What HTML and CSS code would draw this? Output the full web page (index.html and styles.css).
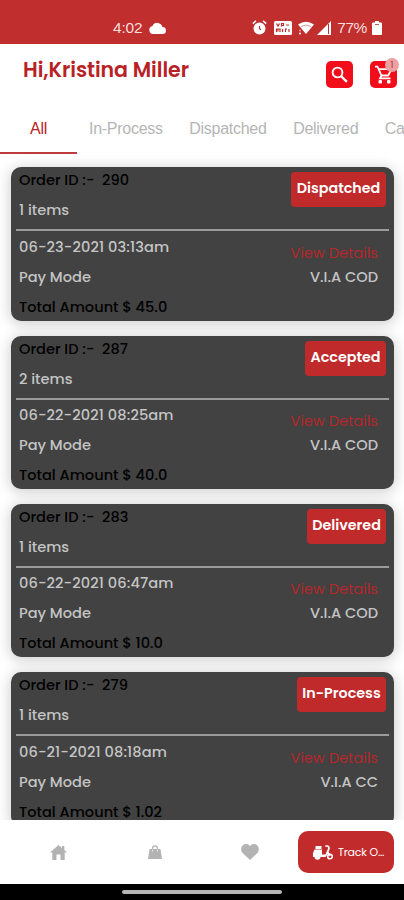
FILE: index.html
```html
<!DOCTYPE html>
<html lang="en">
<head>
    <meta charset="UTF-8">
    <meta name="viewport" content="width=device-width, initial-scale=1.0">
    <title>My Orders</title>
    <link rel="stylesheet" href="styles.css">
</head>
<body>
    <div class="phone">
        <div class="status-bar">
            <span class="time">4:02</span>
            <svg class="cloud" width="17" height="12" viewBox="0 0 17 12"><path fill="#fff" d="M4 12a4 4 0 0 1-.5-7.9A5.2 5.2 0 0 1 13.400 5 3.500 3.500 0 0 1 13.500 12z"/></svg>
            <div class="status-icons">
                <svg width="15" height="15" viewBox="0 0 15 15"><circle cx="7.500" cy="8.500" r="6" fill="#fff"/><path d="M.8 3.600 4 .9M14.200 3.600 11 .9" stroke="#fff" stroke-width="1.500"/><path d="M7.500 6v2.800l1.500 1" fill="none" stroke="#c02e2e" stroke-width="1.200"/></svg>
                <svg width="18" height="14" viewBox="0 0 18 14"><rect width="18" height="14" rx="1.500" fill="#fff"/><path d="M2.500 2.500 4 5l1.500-2.500M7.500 5.500v-3h2v2h-2M12 4h3M2.500 11V8h1.500v2.500V8h2v3M8.500 8v3M11.500 11V8h1.500M15 8v3" fill="none" stroke="#c02e2e" stroke-width="1.200"/></svg>
                <svg width="16" height="14" viewBox="0 0 16 14"><path fill="#fff" d="M0 3.500Q8-2 16 3.500L8 13z"/><path d="M3 5.500Q8 2.500 13 5.500" fill="none" stroke="#c02e2e" stroke-width=".5"/><path d="M1 12.500h2M1.500 9.500h1" stroke="#fff" stroke-width="1.300"/></svg>
                <svg width="14" height="14" viewBox="0 0 14 14"><path fill="#fff" d="M14 0v14H0z"/><path d="M11.500 3v10" stroke="#c02e2e" stroke-width="1"/></svg>
                <span class="percent">77%</span>
                <svg width="10" height="14" viewBox="0 0 10 14"><path fill="#fff" d="M3 0h4v1.500h2a1 1 0 0 1 1 1V13a1 1 0 0 1-1 1H1a1 1 0 0 1-1-1V2.500a1 1 0 0 1 1-1h2z"/><path d="M3 3.500h4" stroke="#c02e2e" stroke-width=".8"/></svg>
            </div>
        </div>

        <header class="header">
            <h1>Hi,Kristina Miller</h1>
            <button class="icon-btn" aria-label="Search">
                <svg width="17" height="17" viewBox="0 0 17 17" fill="none" stroke="#fff"><circle cx="6.500" cy="6.500" r="4.900" stroke-width="1.900"/><path d="m10.200 10.200 5.700 5.700" stroke-width="2.300"/></svg>
            </button>
            <button class="icon-btn" aria-label="Cart">
                <svg width="19" height="19" viewBox="0 0 19 19"><path d="M1 1.700h2.500l4 8.800h6.700l3.300-6.300M4.600 4.200H13M7.500 10.500 6 13.300h10.500" fill="none" stroke="#fff" stroke-width="1.800"/><rect x="4.500" y="15" width="3.500" height="3.500" rx="1" fill="#fff"/><rect x="13" y="15" width="3.500" height="3.500" rx="1" fill="#fff"/></svg>
                <span class="cart-count">1</span>
            </button>
        </header>

        <nav class="tabs">
            <span class="tab active">All</span>
            <span class="tab">In-Process</span>
            <span class="tab">Dispatched</span>
            <span class="tab">Delivered</span>
            <span class="tab">Cancelled</span>
        </nav>

        <main class="orders">
            <div class="card">
                <div class="card-top">
                    <div>
                        <p class="order-id">Order ID :-&nbsp; 290</p>
                        <p class="items">1 items</p>
                    </div>
                    <span class="badge dispatched">Dispatched</span>
                </div>
                <div class="card-bottom">
                    <div>
                        <p class="date">06-23-2021 03:13am</p>
                        <p class="pay">Pay Mode</p>
                        <p class="total">Total Amount $ 45.0</p>
                    </div>
                    <div class="right">
                        <p class="details">View Details</p>
                        <p class="via">V.I.A COD</p>
                    </div>
                </div>
            </div>
            <div class="card">
                <div class="card-top">
                    <div>
                        <p class="order-id">Order ID :-&nbsp; 287</p>
                        <p class="items">2 items</p>
                    </div>
                    <span class="badge accepted">Accepted</span>
                </div>
                <div class="card-bottom">
                    <div>
                        <p class="date">06-22-2021 08:25am</p>
                        <p class="pay">Pay Mode</p>
                        <p class="total">Total Amount $ 40.0</p>
                    </div>
                    <div class="right">
                        <p class="details">View Details</p>
                        <p class="via">V.I.A COD</p>
                    </div>
                </div>
            </div>
            <div class="card">
                <div class="card-top">
                    <div>
                        <p class="order-id">Order ID :-&nbsp; 283</p>
                        <p class="items">1 items</p>
                    </div>
                    <span class="badge delivered">Delivered</span>
                </div>
                <div class="card-bottom">
                    <div>
                        <p class="date">06-22-2021 06:47am</p>
                        <p class="pay">Pay Mode</p>
                        <p class="total">Total Amount $ 10.0</p>
                    </div>
                    <div class="right">
                        <p class="details">View Details</p>
                        <p class="via">V.I.A COD</p>
                    </div>
                </div>
            </div>
            <div class="card">
                <div class="card-top">
                    <div>
                        <p class="order-id">Order ID :-&nbsp; 279</p>
                        <p class="items">1 items</p>
                    </div>
                    <span class="badge in-process">In-Process</span>
                </div>
                <div class="card-bottom">
                    <div>
                        <p class="date">06-21-2021 08:18am</p>
                        <p class="pay">Pay Mode</p>
                        <p class="total">Total Amount $ 1.02</p>
                    </div>
                    <div class="right">
                        <p class="details">View Details</p>
                        <p class="via">V.I.A CC</p>
                    </div>
                </div>
            </div>
        </main>

        <nav class="bottom-nav">
            <div class="nav-item">
                <svg width="17" height="15" viewBox="0 0 17 15"><path fill="#b3b3b3" d="M8.500 0 12 3V1h2.300v4L17 7.500h-2.300V15h-4.200V9.500h-4V15H2.300V7.500H0z"/></svg>
            </div>
            <div class="nav-item">
                <svg width="14" height="14" viewBox="0 0 14 14"><path fill="#b3b3b3" d="M1.500 4h11L14 14H0z"/><path d="M4.500 6V3.500a2.500 2.700 0 0 1 5 0V6" fill="none" stroke="#b3b3b3" stroke-width="1.300"/><path d="M4.500 4.500v2M9.500 4.500v2" stroke="#fff" stroke-width=".7"/></svg>
            </div>
            <div class="nav-item">
                <svg width="18" height="16" viewBox="0 0 18 16"><path fill="#b3b3b3" d="M9 16 1.600 9C-1.500 5.500.8 0 5 0c1.800 0 3.200.9 4 2.200C9.800.9 11.200 0 13 0c4.200 0 6.500 5.500 3.400 9z"/></svg>
            </div>
            <button class="track-btn">
                <svg width="20" height="15" viewBox="0 0 20 15"><path fill="#fff" d="M2.500 1h6v3h-6zM1.500 4.500H9v5h3.200l2.600-3.200 1.300 1-3.600 4.700H0V8z"/><circle cx="4.500" cy="11.800" r="3" fill="#fff"/><circle cx="17" cy="11.500" r="2.300" fill="none" stroke="#fff" stroke-width="1.600"/><path d="M12.200 1h2.200q2.500 1 1 4l-1.200 2.500 3.300 3" fill="none" stroke="#fff" stroke-width="1.700"/></svg>
                <span>Track O...</span>
            </button>
        </nav>
        <div class="gesture-bar"><div class="pill"></div></div>
    </div>
</body>
</html>
```
FILE: styles.css
```css
body {
    margin: 0;
    font-family: Poppins, Inter, sans-serif;
    background-color: #fff;
}
p, h1 {
    margin: 0;
}
button {
    border: none;
    padding: 0;
    font-family: inherit;
}
svg {
    display: block;
    flex: none;
}
.phone {
    width: 404px;
    height: 900px;
    display: flex;
    flex-direction: column;
    overflow: hidden;
}
.status-bar {
    height: 44px;
    flex: none;
    box-sizing: border-box;
    padding: 11px 22px 0 113px;
    display: flex;
    align-items: center;
    background-color: #c02e2e;
    color: #f8dddd;
    font-family: "Liberation Sans", sans-serif;
    font-size: 15.5px;
}
.time {
    letter-spacing: -0.2px;
}
.cloud {
    margin-left: 7px;
}
.status-icons {
    margin-left: auto;
    display: flex;
    align-items: center;
    gap: 6px;
}
.status-icons svg:first-child {
    margin-right: 1px;
}
.status-icons svg:nth-child(4) {
    margin-left: -3px;
}
.percent {
    letter-spacing: -0.4px;
    margin-right: -1px;
}
.header {
    height: 60px;
    flex: none;
    display: flex;
    align-items: center;
    padding: 0 7px 0 23px;
}
.header h1 {
    margin-right: auto;
    margin-top: -9px;
    font-size: 20.5px;
    font-weight: 600;
    letter-spacing: -0.05px;
    color: #b92225;
}
.icon-btn {
    position: relative;
    width: 27px;
    height: 27px;
    border-radius: 5px;
    background-color: #f10d19;
    display: flex;
    align-items: center;
    justify-content: center;
    margin-left: 17px;
}
.cart-count {
    position: absolute;
    top: -3px;
    right: -2px;
    width: 14px;
    height: 14px;
    border-radius: 50%;
    background-color: #eba1a1;
    color: #a33;
    font-size: 9px;
    line-height: 14px;
    text-align: center;
}
.tabs {
    height: 50px;
    flex: none;
    display: flex;
    gap: 26.5px;
    overflow: hidden;
    font-family: "Liberation Sans", sans-serif;
    font-size: 16px;
    line-height: 50px;
    color: #b5b5b5;
    letter-spacing: -0.27px;
    white-space: nowrap;
}
.tab {
    flex: none;
}
.tab.active {
    width: 77px;
    box-sizing: border-box;
    margin-right: -14.5px;
    text-align: center;
    color: #b92225;
    border-bottom: 2px solid #bd3b3f;
}
.orders {
    flex: 1;
    min-height: 0;
    overflow: hidden;
    padding: 13.2px 10px 0 11px;
}
.card {
    height: 153.4px;
    margin-bottom: 15px;
    border-radius: 10px;
    background-color: #424242;
    box-shadow: 0 2px 14px 1px rgba(0, 0, 0, 0.2);
    font-size: 14.6px;
    font-weight: 500;
    line-height: 30px;
    color: #c4c4c4;
    white-space: nowrap;
}
.card-top {
    height: 62px;
    margin: 0 5px;
    padding: 0 3px;
    display: flex;
    justify-content: space-between;
    border-bottom: 2px solid #9b9b9b;
}
.order-id {
    line-height: 26px;
    margin-bottom: 2px;
    color: #000;
}
.date {
    letter-spacing: 0.1px;
}
.total {
    color: #000;
}
.badge {
    height: 35px;
    margin-top: 5px;
    border-radius: 4px;
    background-color: #c02a2b;
    color: #fff;
    font-size: 14.3px;
    font-weight: 600;
    line-height: 33px;
    text-align: center;
}
.dispatched {
    width: 95px;
}
.accepted {
    width: 81px;
}
.delivered {
    width: 79px;
}
.in-process {
    width: 89px;
}
.card-bottom {
    display: flex;
    justify-content: space-between;
    padding: 0.5px 16px 0 8px;
    line-height: 30px;
}
.right {
    text-align: right;
}
.details {
    padding-top: 6px;
    line-height: 30px;
    margin-bottom: -6px;
    font-weight: 400;
    color: #b5272b;
}
.bottom-nav {
    height: 64px;
    flex: none;
    display: flex;
    align-items: center;
    background-color: #fff;
    padding-left: 11px;
}
.nav-item {
    width: 95.7px;
    display: flex;
    justify-content: center;
}
.track-btn {
    box-sizing: border-box;
    width: 96px;
    height: 42px;
    padding-left: 5px;
    border-radius: 10px;
    background-color: #c12b2b;
    color: #fff;
    display: flex;
    align-items: center;
    justify-content: center;
    gap: 5px;
    font-size: 11px;
    letter-spacing: -0.2px;
    white-space: nowrap;
}
.gesture-bar {
    height: 16px;
    flex: none;
    background-color: #000;
    display: flex;
    align-items: center;
    justify-content: center;
}
.pill {
    width: 160px;
    height: 4px;
    border-radius: 2px;
    background-color: #b5b5b5;
}
```
